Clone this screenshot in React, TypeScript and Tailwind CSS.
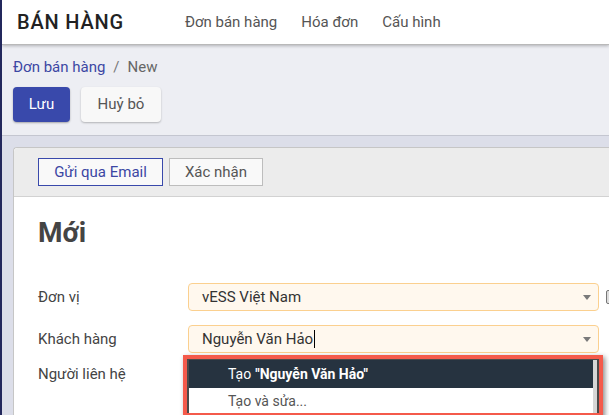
import React from 'react';

const navItems = ['Đơn bán hàng', 'Hóa đơn', 'Cấu hình'];

const Caret = () => (
  <span className="ml-auto mr-[7px] h-0 w-0 border-x-[4px] border-t-[5px] border-x-transparent border-t-[#7a7a7a]" />
);

const SelectField = ({ value, cursor }: { value: string; cursor?: boolean }) => (
  <div className="flex h-[28px] w-[411px] shrink-0 items-center rounded-[4px] border border-[#fbd08f] bg-[#fff8ee] pl-[13px] text-[15px] text-[#333]">
    <span>{value}</span>
    {cursor && <span className="ml-[1px] h-[18px] w-px bg-black" />}
    <Caret />
  </div>
);

const App = () => {
  return (
    <div className="flex h-[415px] w-[609px] overflow-hidden border-l-2 border-[#23285c] bg-[#dcdee9] font-['Roboto',sans-serif]">
      <div className="flex min-w-0 flex-1 flex-col">
        <header className="relative z-10 flex h-[45px] shrink-0 items-center border-b border-[#b9b9b9] bg-white shadow-[0_1px_3px_rgba(0,0,0,0.25)]">
          <span className="ml-[15px] text-[20px] font-medium tracking-[0.8px] text-[#222]">BÁN HÀNG</span>
          <nav className="ml-[61px] flex gap-[24px] text-[15px] text-[#555]">
            {navItems.map((item) => (
              <span key={item}>{item}</span>
            ))}
          </nav>
        </header>

        <div className="shrink-0 border-b border-[#c4c6d0] bg-[#edeef3] px-[11px] pb-[13px] pt-[12px]">
          <div className="flex h-[20px] items-center text-[15px]">
            <span className="text-[#3c47a3]">Đơn bán hàng</span>
            <span className="mx-[8px] text-[#777]">/</span>
            <span className="text-[#666]">New</span>
          </div>
          <div className="mt-[10px] flex gap-[11px]">
            <button className="h-[35px] w-[57px] rounded-[4px] bg-[#3949ab] text-[15px] text-white shadow-[0_1px_2px_rgba(0,0,0,0.3)]">
              Lưu
            </button>
            <button className="h-[35px] w-[80px] rounded-[4px] bg-[#f8f8f8] text-[15px] text-[#555] shadow-[0_1px_2px_rgba(0,0,0,0.25)]">
              Huỷ bỏ
            </button>
          </div>
        </div>

        <div className="flex-1 pl-[11px] pt-[11px]">
          <div className="h-full rounded-tl-[4px] border-l border-t border-[#c6c6c6] bg-white">
            <div className="flex h-[49px] items-center gap-[6px] rounded-tl-[4px] border-b border-[#d2d2d2] bg-[#ececec] pl-[24px]">
              <button className="h-[28px] w-[125px] border border-[#3949ab] bg-[#f9f9f9] text-[15px] text-[#3c47a3]">
                Gửi qua Email
              </button>
              <button className="h-[28px] w-[94px] border border-[#bdbdbd] bg-[#f9f9f9] text-[15px] text-[#555]">
                Xác nhận
              </button>
            </div>

            <div className="pl-[24px] pt-[19px]">
              <h1 className="text-[28px] font-bold leading-[34px] text-[#444]">Mới</h1>

              <div className="mt-[33px] flex flex-col gap-[14px] text-[15px] text-[#444]">
                <div className="flex items-center">
                  <span className="w-[150px] shrink-0">Đơn vị</span>
                  <SelectField value="vESS Việt Nam" />
                  <span className="ml-[7px] h-[14px] w-[10px] shrink-0 rounded-[2px] border border-[#777] bg-[#ddd]" />
                </div>
                <div className="flex items-center">
                  <span className="w-[150px] shrink-0">Khách hàng</span>
                  <div className="relative">
                    <SelectField value="Nguyễn Văn Hảo" cursor />
                    <div className="absolute left-[-5px] top-[calc(100%+2px)] z-20 h-[62px] w-[420px] border-[4px] border-[#f45a4b] shadow-[2px_2px_5px_rgba(0,0,0,0.45)]">
                      <div className="flex h-full border-l-2 border-t border-r-2 border-[#4a4a4a] bg-white">
                        <div className="flex-1">
                          <div className="flex h-[28px] items-center bg-[#263340] pl-[39px] text-[14px] text-white">
                            Tạo <span className="ml-[4px] font-bold">"Nguyễn Văn Hảo"</span>
                          </div>
                          <div className="pl-[39px] pt-[3px] text-[14px] text-[#555]">Tạo và sửa...</div>
                        </div>
                        <div className="w-[4px] bg-[#d6d6d6]" />
                      </div>
                    </div>
                  </div>
                </div>
                <div className="-mt-[7px] flex h-[28px] items-center">
                  <span className="w-[150px] shrink-0">Người liên hệ</span>
                </div>
              </div>
            </div>
          </div>
        </div>
      </div>
    </div>
  );
};

export default App;
